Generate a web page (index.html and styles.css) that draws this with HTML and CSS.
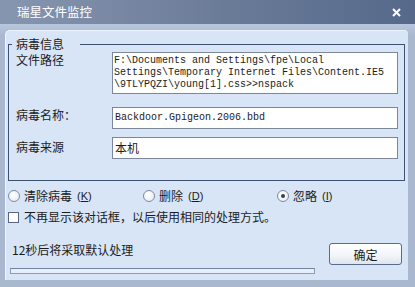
FILE: index.html
```html
<!DOCTYPE html>
<html lang="zh-CN">
<head>
  <meta charset="UTF-8">
  <title>瑞星文件监控</title>
  <link rel="stylesheet" href="styles.css">
</head>
<body>
<div class="window">
  <div class="titlebar">
    <span class="title">瑞星文件监控</span>
    <svg class="close" width="9" height="9" viewBox="0 0 9 9">
      <path d="M1 1L8 8M8 1L1 8" stroke="#fff" stroke-width="2"/>
    </svg>
  </div>
  <div class="frame">
    <div class="client">
      <fieldset class="info">
        <legend>病毒信息</legend>
        <div class="row">
          <label>文件路径</label>
          <div class="field path">F:\Documents and Settings\fpe\Local<br>Settings\Temporary Internet Files\Content.IE5<br>\9TLYPQZI\young[1].css&gt;&gt;nspack</div>
        </div>
        <div class="row gap-lg">
          <label>病毒名称：</label>
          <div class="field line mono">Backdoor.Gpigeon.2006.bbd</div>
        </div>
        <div class="row gap-sm">
          <label class="mid">病毒来源</label>
          <div class="field line">本机</div>
        </div>
      </fieldset>

      <div class="choices">
        <label class="radio"><span class="dot"></span>清除病毒<span class="key">(<u>K</u>)</span></label>
        <label class="radio"><span class="dot"></span>删除<span class="key">(<u>D</u>)</span></label>
        <label class="radio"><span class="dot on"></span>忽略<span class="key">(<u>I</u>)</span></label>
      </div>
      <label class="check"><span class="box"></span>不再显示该对话框，以后使用相同的处理方式。</label>

      <div class="footer">
        <div class="countdown">12秒后将采取默认处理</div>
        <button class="ok">确定</button>
      </div>
      <div class="progress"></div>
    </div>
  </div>
</div>
</body>
</html>
```

FILE: styles.css
```css
body {
  margin: 0;
  font-family: "Noto Sans CJK SC", sans-serif;
  font-size: 12px;
  color: #1c1c1c;
}
.window {
  width: 415px;
  height: 287px;
  background: #a8b7cf;
  display: flex;
  flex-direction: column;
}
.titlebar {
  height: 24px;
  flex-shrink: 0;
  display: flex;
  align-items: center;
  justify-content: space-between;
  padding: 0 14px 0 17px;
  background: linear-gradient(to right, #8796b0, #6a7b98 55%, #56698a);
  color: #fff;
}
.title {
  font-size: 12.5px;
  line-height: 16px;
}
.close {
  display: block;
}
.frame {
  flex: 1;
  padding: 6px 7px 7px 5px;
  background: linear-gradient(#b7c7de, #a9b8cf 12px);
}
.client {
  height: 100%;
  box-sizing: border-box;
  background: #d8e5f7;
  border-top: 1px solid #edf3fc;
  border-left: 1px solid #edf3fc;
  border-radius: 5px 4px 0 0;
}
.info {
  margin: 5px 3px 0 2px;
  padding: 0 6px 21px 7px;
  border: 1px solid #3e5170;
  min-width: 0;
}
.info legend {
  margin-left: -4px;
  padding: 0 16px 0 4px;
  line-height: 16px;
}
.row {
  display: grid;
  grid-template-columns: 96px 1fr;
  align-items: start;
}
.row label {
  line-height: 16px;
}
.row label.mid {
  margin-top: 2px;
}
.gap-lg {
  margin-top: 13px;
}
.gap-sm {
  margin-top: 8px;
}
.field {
  background: #fff;
  border: 1px solid #7c8799;
  box-sizing: border-box;
}
.path {
  height: 42px;
  padding: 2px 1px;
  font-family: "Liberation Mono", monospace;
  font-size: 10px;
  line-height: 12px;
  white-space: nowrap;
  overflow: hidden;
}
.line {
  height: 22px;
  padding: 0 2px;
  line-height: 20px;
}
.mono {
  font-family: "Liberation Mono", monospace;
  font-size: 10px;
}
.choices {
  display: grid;
  grid-template-columns: 135px 134px 1fr;
  margin: 7px 0 0 2px;
  line-height: 16px;
}
.radio,
.check {
  display: flex;
  align-items: center;
  gap: 4px;
}
.key {
  font-family: "Liberation Sans", sans-serif;
  font-size: 11px;
  margin-left: 1px;
}
.dot {
  width: 10px;
  height: 10px;
  border: 1px solid #7d8ba3;
  border-radius: 50%;
  background: radial-gradient(circle at 40% 40%, #fff, #e4e8ef);
  position: relative;
}
.dot.on::after {
  content: "";
  position: absolute;
  left: 3px;
  top: 3px;
  width: 4px;
  height: 4px;
  border-radius: 50%;
  background: #3a3f48;
}
.check {
  margin: 5px 0 0 2px;
  line-height: 16px;
}
.box {
  width: 9px;
  height: 9px;
  border: 1px solid #59677e;
  background: #fff;
  margin-right: 1px;
}
.footer {
  display: flex;
  justify-content: space-between;
  align-items: flex-start;
  margin-top: 18px;
  padding: 0 6px 0 6px;
}
.countdown {
  line-height: 16px;
  margin-top: -1px;
}
.ok {
  width: 73px;
  height: 22px;
  padding: 0;
  border: 1px solid #5b6c8a;
  border-radius: 3px;
  background: linear-gradient(#ffffff, #f1f4f9 60%, #dfe5ee);
  font-family: "Noto Sans CJK SC", sans-serif;
  font-size: 12px;
  color: #1c1c1c;
}
.progress {
  margin: 3px 0 0 4px;
  width: 305px;
  height: 6px;
  box-sizing: border-box;
  border: 1px solid #8a9dbc;
  border-top-color: #6f83a4;
  background: #e7eef8;
}
```
